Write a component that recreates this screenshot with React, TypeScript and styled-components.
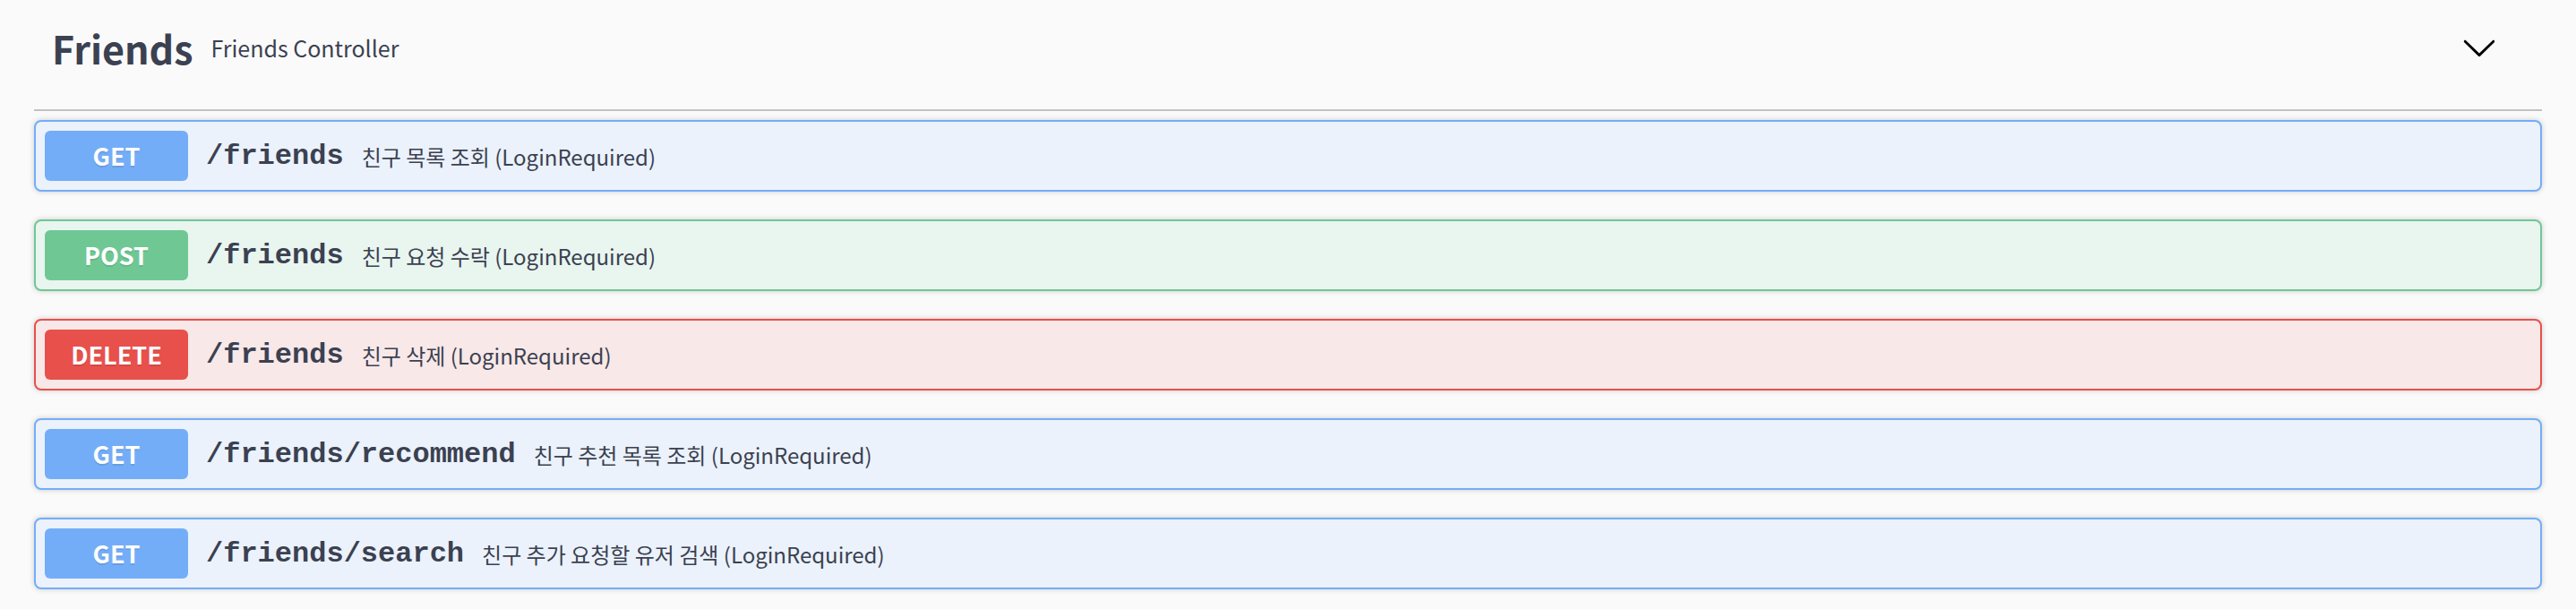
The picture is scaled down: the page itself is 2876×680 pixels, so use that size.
import React from "react";
import styled, { createGlobalStyle } from "styled-components";

const GlobalStyle = createGlobalStyle`
  html, body { margin: 0; padding: 0; background: #fafafa; }
  body { font-family: "Noto Sans CJK KR", "Noto Sans", sans-serif; color: #3b4151; }
`;

type Method = "get" | "post" | "delete";

const palette: Record<Method, { main: string; bg: string }> = {
  get: { main: "#74adf7", bg: "#ebf2fb" },
  post: { main: "#6fc894", bg: "#e9f5ef" },
  delete: { main: "#e8504b", bg: "#f8e8e8" },
};

const Wrapper = styled.div`
  padding: 0 38px;
`;

const TagSection = styled.section`
  display: flex;
  flex-direction: column;
`;

const TagHeader = styled.h3`
  box-sizing: border-box;
  display: flex;
  align-items: center;
  height: 124px;
  margin: 0 0 10px;
  padding: 0 40px 16px 20px;
  border-bottom: 2px solid rgba(59, 65, 81, 0.3);
`;

const TagTitle = styled.span`
  font-family: "Noto Sans CJK KR", sans-serif;
  font-size: 43px;
  font-weight: 700;
  color: #3b4151;
`;

const TagSmall = styled.small`
  font-family: "Noto Sans CJK KR", sans-serif;
  font-size: 25px;
  font-weight: 400;
  color: #3b4151;
  padding: 0 20px;
  flex: 1;
`;

const ExpandButton = styled.button`
  display: flex;
  align-items: center;
  border: none;
  background: transparent;
  padding: 0 10px 0 0;
  margin: 0;
  cursor: pointer;
`;

const OpBlock = styled.div<{ $method: Method }>`
  margin: 0 0 31px;
  border: 2px solid ${(p) => palette[p.$method].main};
  background: ${(p) => palette[p.$method].bg};
  border-radius: 8px;
  box-shadow: 0 0 6px rgba(0, 0, 0, 0.19);
`;

const Summary = styled.div`
  display: flex;
  align-items: center;
  padding: 10px;
`;

const MethodBadge = styled.span<{ $method: Method }>`
  min-width: 160px;
  padding: 12px 0;
  line-height: 32px;
  font-family: "Noto Sans CJK KR", sans-serif;
  font-size: 27px;
  font-weight: 700;
  text-align: center;
  color: #fff;
  background: ${(p) => palette[p.$method].main};
  border-radius: 6px;
  text-shadow: 0 2px 0 rgba(0, 0, 0, 0.1);
`;

const Path = styled.span`
  padding: 0 20px;
  font-family: "Liberation Mono", "Courier New", monospace;
  font-size: 32px;
  font-weight: 700;
  color: #3b4151;
`;

const Description = styled.span`
  font-family: "Noto Sans CJK KR", sans-serif;
  font-size: 24px;
  color: #3b4151;
`;

const ops: { method: Method; path: string; desc: string }[] = [
  { method: "get", path: "/friends", desc: "친구 목록 조회 (LoginRequired)" },
  { method: "post", path: "/friends", desc: "친구 요청 수락 (LoginRequired)" },
  { method: "delete", path: "/friends", desc: "친구 삭제 (LoginRequired)" },
  { method: "get", path: "/friends/recommend", desc: "친구 추천 목록 조회 (LoginRequired)" },
  { method: "get", path: "/friends/search", desc: "친구 추가 요청할 유저 검색 (LoginRequired)" },
];

const Chevron = () => (
  <svg width="40" height="40" viewBox="0 0 20 20" aria-hidden="true">
    <path
      fill="#000"
      d="M17.418 6.109c.272-.268.709-.268.979 0s.271.701 0 .969l-7.908 7.83c-.27.268-.707.268-.979 0l-7.908-7.830c-.27-.268-.27-.701 0-.969.271-.268.709-.268.979 0L10 13.25l7.418-7.141z"
    />
  </svg>
);

export default function App() {
  return (
    <>
      <GlobalStyle />
      <Wrapper>
        <TagSection>
          <TagHeader>
            <TagTitle>Friends</TagTitle>
            <TagSmall>Friends Controller</TagSmall>
            <ExpandButton aria-label="collapse">
              <Chevron />
            </ExpandButton>
          </TagHeader>
          {ops.map((op, i) => (
            <OpBlock key={i} $method={op.method}>
              <Summary>
                <MethodBadge $method={op.method}>{op.method.toUpperCase()}</MethodBadge>
                <Path>{op.path}</Path>
                <Description>{op.desc}</Description>
              </Summary>
            </OpBlock>
          ))}
        </TagSection>
      </Wrapper>
    </>
  );
}
